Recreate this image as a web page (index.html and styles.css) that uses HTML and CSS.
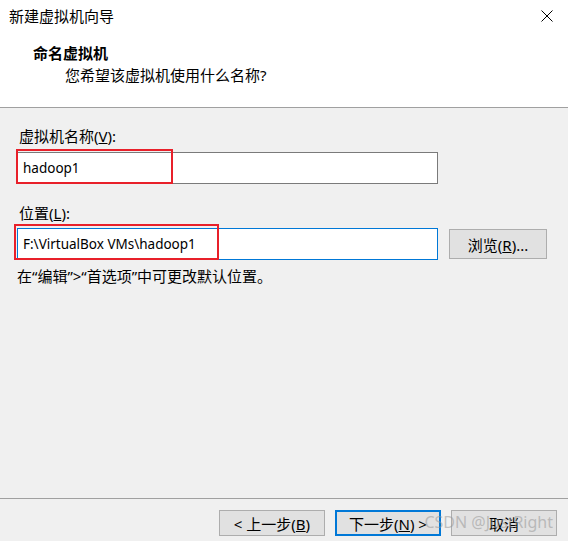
FILE: index.html
```html
<!DOCTYPE html>
<html lang="zh-CN">
<head>
    <meta charset="UTF-8">
    <title>新建虚拟机向导</title>
    <link rel="stylesheet" href="styles.css">
</head>
<body>
    <div class="dialog">
        <div class="header">
            <div class="titlebar">
                <span class="title">新建虚拟机向导</span>
                <svg class="close" width="12" height="12" viewBox="0 0 12 12">
                    <path d="M0.5 0.5 L11.5 11.5 M11.5 0.5 L0.5 11.5" stroke="#000" stroke-width="1" fill="none"/>
                </svg>
            </div>
            <div class="page-title">命名虚拟机</div>
            <div class="page-sub">您希望该虚拟机使用什么名称?</div>
        </div>

        <div class="content">
            <div class="label label-name">虚拟机名称(<u>V</u>):</div>
            <div class="row">
                <div class="field">
                    <input type="text" class="input" value="hadoop1">
                    <span class="mark mark-name"></span>
                </div>
            </div>

            <div class="label label-path">位置(<u>L</u>):</div>
            <div class="row">
                <div class="field">
                    <input type="text" class="input focused" value="F:\VirtualBox VMs\hadoop1">
                    <span class="mark mark-path"></span>
                </div>
                <button class="btn browse">浏览(<u>R</u>)...</button>
            </div>
            <div class="hint">在“编辑”&gt;“首选项”中可更改默认位置。</div>
        </div>

        <div class="footer">
            <button class="btn">&lt; 上一步(<u>B</u>)</button>
            <button class="btn default">下一步(<u>N</u>) &gt;</button>
            <button class="btn">取消</button>
            <span class="watermark">CSDN @JustRight</span>
        </div>
    </div>
</body>
</html>
```

FILE: styles.css
```css
html, body {
    margin: 0;
    height: 100%;
}
body {
    font-family: "Noto Sans", "Noto Sans CJK SC", sans-serif;
    font-size: 15px;
    color: #000;
    background: #f0f0f0;
}
.dialog {
    display: flex;
    flex-direction: column;
    height: 541px;
    position: relative;
}
.header {
    background: #fff;
    height: 107px;
    border-bottom: 1px solid #a0a0a0;
}
.titlebar {
    height: 32px;
    display: flex;
    align-items: center;
    justify-content: space-between;
    padding: 0 15px 0 9px;
}
.title {
    line-height: 20px;
}
.page-title {
    font-weight: bold;
    line-height: 20px;
    margin-top: 11px;
    padding-left: 33px;
}
.page-sub {
    line-height: 20px;
    margin-top: 2px;
    padding-left: 65px;
}
.content {
    padding-left: 17px;
}
.label {
    line-height: 20px;
    padding-left: 2px;
}
.label-name {
    margin-top: 18px;
    margin-bottom: 6px;
}
.label-path {
    margin-top: 19px;
    margin-bottom: 5px;
}
.row {
    display: flex;
    align-items: center;
    gap: 11px;
}
.field {
    position: relative;
}
.input {
    box-sizing: border-box;
    width: 421px;
    height: 32px;
    border: 1px solid #7a7a7a;
    background: #fff;
    padding: 0 5px;
    font-family: "Noto Sans", "Noto Sans CJK SC", sans-serif;
    font-size: 13.5px;
    color: #000;
    outline: none;
    display: block;
}
.input.focused {
    border-color: #0078d7;
}
.mark {
    position: absolute;
    border: 2px solid #e8202a;
    box-sizing: border-box;
    pointer-events: none;
}
.mark-name {
    left: -1px;
    top: -3px;
    width: 157px;
    height: 35px;
}
.mark-path {
    left: -3px;
    top: -4px;
    width: 205px;
    height: 36px;
}
.btn {
    box-sizing: border-box;
    width: 106px;
    height: 26px;
    border: 1px solid #adadad;
    background: #e1e1e1;
    font-family: "Noto Sans", "Noto Sans CJK SC", sans-serif;
    font-size: 15px;
    color: #000;
    padding: 0;
}
.btn.browse {
    width: 98px;
    height: 30px;
}
.btn.default {
    border: 2px solid #0078d7;
}
.hint {
    line-height: 20px;
    margin-top: 6px;
}
.footer {
    margin-top: auto;
    border-top: 1px solid #a0a0a0;
    display: flex;
    justify-content: flex-end;
    gap: 10px;
    padding: 11px 11px 5px 0;
    position: relative;
}
.watermark {
    position: absolute;
    right: 15px;
    bottom: 8px;
    font-size: 16px;
    color: rgba(150, 150, 150, 0.55);
    pointer-events: none;
}
```
